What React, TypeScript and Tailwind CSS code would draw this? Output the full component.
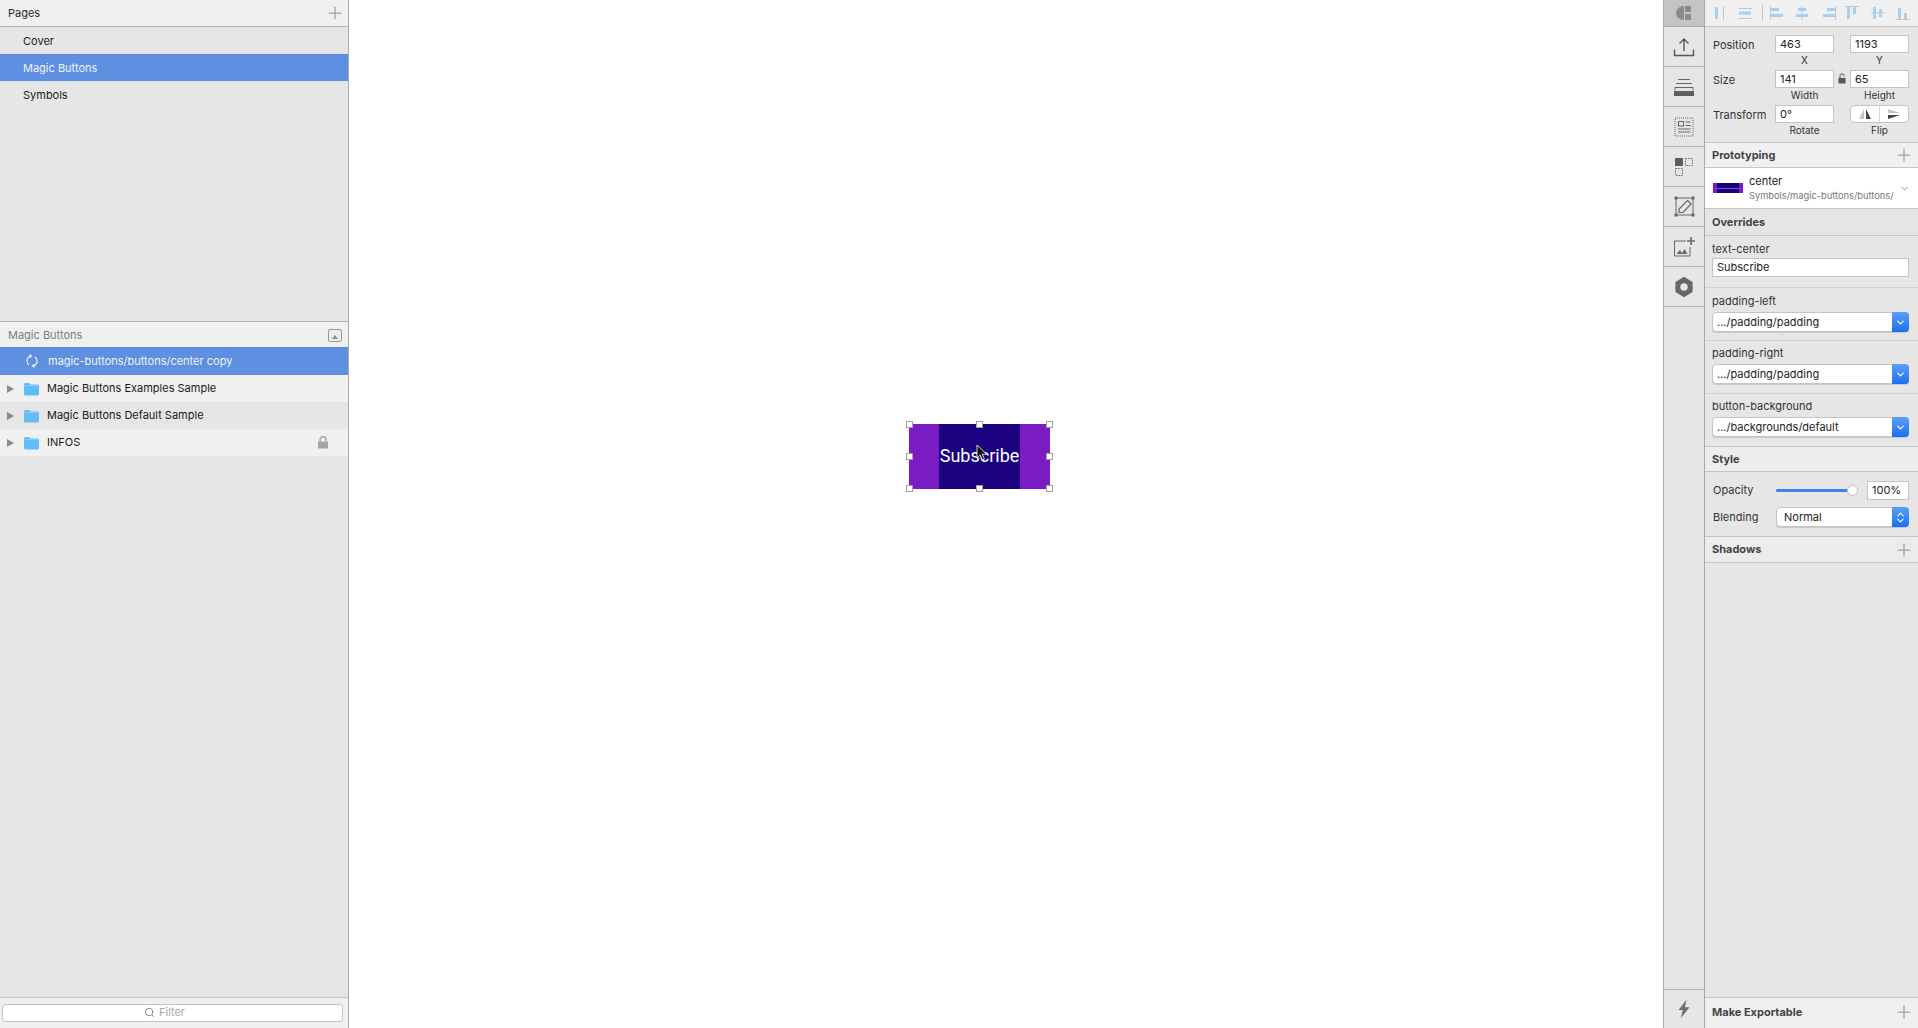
import type { ReactNode } from "react";
import { Plus, ChevronDown, Search, ChevronsUpDown } from "lucide-react";

const font = "font-['Inter','Liberation_Sans',sans-serif]";

function FolderIcon() {
  return (
    <svg width="17" height="14" viewBox="0 0 17 14" className="shrink-0">
      <path d="M1 2.500C1 1.600 1.600 1 2.500 1h3.600l1.500 1.500h7c.8 0 1.400.6 1.400 1.400v8.200c0 .8-.6 1.400-1.400 1.400H2.400C1.600 13.500 1 12.900 1 12.100z" fill="#62bdf6" />
      <path d="M1 3.600h15" stroke="#8fd2fa" strokeWidth="0.8" />
    </svg>
  );
}

function Disclosure() {
  return <span className="ml-[7px] mr-[9px] h-0 w-0 shrink-0 border-y-[4.5px] border-l-[7px] border-y-transparent border-l-[#8a8a8a]" />;
}

function LayerRow({ name, dark, locked }: { name: string; dark?: boolean; locked?: boolean }) {
  return (
    <div className={`flex h-[27px] items-center text-[11px] text-[#1a1a1a] ${dark ? "bg-[#e6e6e6]" : "bg-[#f0f0f0]"}`}>
      <Disclosure />
      <FolderIcon />
      <span className="ml-[7px]">{name}</span>
      {locked && (
        <svg width="12" height="13" viewBox="0 0 12 13" className="-mt-[1px] ml-auto mr-[19px]">
          <rect x="1" y="5.500" width="10" height="7" rx="1" fill="#a3a3a3" />
          <path d="M3 5.500V3.800a3 3 0 0 1 6 0v1.700" fill="none" stroke="#a3a3a3" strokeWidth="1.400" />
        </svg>
      )}
    </div>
  );
}

function PageRow({ name, active }: { name: string; active?: boolean }) {
  return (
    <div className={`flex h-[27px] items-center pl-[23px] pt-px text-[11px] ${active ? "bg-[#5f8fe0] text-[#eef3fc]" : "text-[#1a1a1a]"}`}>
      {name}
    </div>
  );
}

function LeftPanel() {
  return (
    <aside className="flex h-full w-[349px] shrink-0 flex-col border-r border-[#a8a8a8] bg-[#e6e6e6]">
      <div className="flex h-[27px] shrink-0 items-center justify-between border-b border-[#b4b4b4] bg-[#f0f0f0] pl-[8px] pr-[3px] text-[11px] text-[#2a2a2a]">
        <span>Pages</span>
        <Plus className="h-[20px] w-[20px] text-[#a0a0a0]" strokeWidth={1.500} />
      </div>
      <div className="h-[295px] shrink-0 border-b border-[#b4b4b4]">
        <PageRow name="Cover" />
        <PageRow name="Magic Buttons" active />
        <PageRow name="Symbols" />
      </div>
      <div className="flex h-[25px] shrink-0 items-center justify-between bg-[#f0f0f0] pl-[8px] pr-[6px] pt-px text-[11px] text-[#7d7d7d]">
        <span>Magic Buttons</span>
        <span className="flex h-[13px] w-[14px] items-end justify-center rounded-[2px] border border-[#9a9a9a] bg-[#ececec] pb-[2px]">
          <span className="h-0 w-0 border-x-[3px] border-b-[4px] border-x-transparent border-b-[#8a8a8a]" />
        </span>
      </div>
      <div className="flex h-[28px] shrink-0 items-center bg-[#5f8fe0] text-[11px] text-[#eef3fc]">
        <svg width="14" height="14" viewBox="0 0 14 14" fill="none" stroke="#eef3fc" strokeWidth="1.200" className="ml-[25px] mr-[9px] shrink-0">
          <path d="M6 2C3 2.500 1.500 5 2 7.500 2.300 9 3 10 4 11" />
          <path d="M4.500.5 6.500 2 4.500 3.700" />
          <path d="M8 12c3-.5 4.500-3 4-5.500C11.700 5 11 4 10 3" />
          <path d="M9.500 10.300 7.500 12l2 1.500" />
        </svg>
        magic-buttons/buttons/center copy
      </div>
      <LayerRow name="Magic Buttons Examples Sample" />
      <LayerRow name="Magic Buttons Default Sample" dark />
      <LayerRow name="INFOS" locked />
      <div className="flex-1" />
      <div className="flex h-[31px] shrink-0 items-center border-t border-[#c6c6c6] bg-[#f0f0f0] pb-[1px] pl-[2px] pr-[5px]">
        <div className="flex h-[18px] w-full items-center justify-center gap-[4px] rounded-[3px] border border-[#c4c4c4] bg-white pr-[16px] text-[11px] text-[#a8a8a8]">
          <Search className="h-[11px] w-[11px] text-[#6e6e6e]" strokeWidth={1.800} />
          Filter
        </div>
      </div>
    </aside>
  );
}

function Handle({ className }: { className: string }) {
  return <span className={`absolute h-[7px] w-[7px] border border-[#a0a0a0] bg-white ${className}`} />;
}

function Canvas() {
  return (
    <main className="relative h-full flex-1 bg-white">
      <div className="absolute left-[560px] top-[424px] flex h-[65px] w-[141px] bg-[#7a1bc4]">
        <div className="ml-[30px] flex w-[81px] items-center justify-center bg-[#1b0080] pb-[2px] font-['Roboto',sans-serif] text-[18px] text-white">
          Subscribe
        </div>
        <Handle className="-left-[3px] -top-[3px]" />
        <Handle className="left-[67px] -top-[3px]" />
        <Handle className="-right-[3px] -top-[3px]" />
        <Handle className="-left-[3px] top-[29px]" />
        <Handle className="-right-[3px] top-[29px]" />
        <Handle className="-bottom-[3px] -left-[3px]" />
        <Handle className="-bottom-[3px] left-[67px]" />
        <Handle className="-bottom-[3px] -right-[3px]" />
        <svg width="12" height="18" viewBox="0 0 12 18" className="absolute left-[67px] top-[20px]">
          <path d="M1 1v13l3.200-3 2.200 5 2-.9-2.100-4.900h4.400z" fill="#111" stroke="#fff" strokeWidth="0.8" />
        </svg>
      </div>
    </main>
  );
}

function StripCell({ children }: { children: ReactNode }) {
  return <div className="flex h-[40px] items-center justify-center border-b border-[#b4b4b4]">{children}</div>;
}

function Strip() {
  return (
    <div className="flex h-full w-[42px] shrink-0 flex-col border-x border-[#a8a8a8] bg-[#e6e6e6]">
      <div className="flex h-[27px] items-center justify-center border-b border-[#a8a8a8] bg-[#c4c4c4]">
        <svg width="18" height="16" viewBox="0 0 18 16">
          <path d="M9 1v14C4.500 15 1 12 1 8s3.500-7 8-7z" fill="#8b8b8b" />
          <path d="M10 1h6v6h-6zM10 9h6v6h-6z" fill="#8b8b8b" />
        </svg>
      </div>
      <StripCell>
        <svg width="22" height="22" viewBox="0 0 22 22" fill="none" stroke="#555" strokeWidth="1.400">
          <path d="M1.500 13.500v6h19v-6" />
          <path d="M11 15V3M6.500 7.500 11 3l4.500 4.500" />
        </svg>
      </StripCell>
      <StripCell>
        <svg width="22" height="22" viewBox="0 0 22 22" fill="none" stroke="#666" strokeWidth="1">
          <path d="M5 3.500h12M3 7.500h16M2 11.500v3M20 11.500v3M2 11.500h18" />
          <rect x="1" y="15" width="20" height="5" fill="#5e5e5e" stroke="none" />
        </svg>
      </StripCell>
      <StripCell>
        <svg width="20" height="20" viewBox="0 0 20 20" fill="none" stroke="#666" strokeWidth="1">
          <rect x="1" y="1" width="18" height="18" strokeDasharray="1 1" />
          <rect x="4.500" y="4.500" width="5" height="4.500" />
          <path d="M11.500 5h5M11.500 8.500h5M4 12h12.500M4 15h12.500" />
        </svg>
      </StripCell>
      <StripCell>
        <svg width="20" height="20" viewBox="0 0 20 20" fill="none" stroke="#666" strokeWidth="1">
          <rect x="1" y="1" width="8" height="8" fill="#5e5e5e" stroke="none" />
          <rect x="11.500" y="1.500" width="7" height="7" strokeDasharray="1.500 1.200" />
          <rect x="1.500" y="11.500" width="7" height="7" strokeDasharray="1.500 1.200" />
        </svg>
      </StripCell>
      <StripCell>
        <svg width="21" height="21" viewBox="0 0 21 21" fill="none" stroke="#666" strokeWidth="1">
          <rect x="2" y="2" width="17" height="17" />
          <rect x="0.500" y="0.500" width="3" height="3" fill="#666" stroke="none" />
          <rect x="17.500" y="0.500" width="3" height="3" fill="#666" stroke="none" />
          <rect x="0.500" y="17.500" width="3" height="3" fill="#666" stroke="none" />
          <rect x="17.500" y="17.500" width="3" height="3" fill="#666" stroke="none" />
          <path d="M13.500 4.500 17 8l-8 8.500H5V13z" fill="#e6e6e6" strokeWidth="1.200" />
        </svg>
      </StripCell>
      <StripCell>
        <svg width="22" height="22" viewBox="0 0 22 22" fill="none" stroke="#666" strokeWidth="1">
          <path d="M13 5H1.500v15h15.500v-9" />
          <path d="M3.500 18l3.500-4 2.500 4zM8.500 18l3-5 3 5z" fill="#666" stroke="none" />
          <path d="M18 1v8M14 5h8" strokeWidth="1.600" />
        </svg>
      </StripCell>
      <StripCell>
        <svg width="20" height="22" viewBox="0 0 20 22">
          <path fillRule="evenodd" d="M10 .8 18.600 5.900v10.200L10 21.200 1.400 16.100V5.900zM10 7.300a3.700 3.700 0 1 0 0 7.400 3.700 3.700 0 0 0 0-7.400z" fill="#666" />
        </svg>
      </StripCell>
      <div className="flex-1" />
      <div className="flex h-[39px] items-center justify-center border-t border-[#b4b4b4]">
        <svg width="14" height="20" viewBox="0 0 14 20">
          <path d="M9.500 .8 1.500 11h4.300L3.800 19.200 12.500 8.200H7.900z" fill="#707070" />
        </svg>
      </div>
    </div>
  );
}

function NumField({ value, sub }: { value: string; sub: string }) {
  return (
    <div className="flex w-[59px] flex-col items-center">
      <div className="flex h-[18px] w-full items-center border border-[#c4c4c4] bg-white pl-[4px] text-[11px] text-[#222]">{value}</div>
      <span className="text-[10px] leading-[14px] text-[#333]">{sub}</span>
    </div>
  );
}

function SelectField({ value, up }: { value: string; up?: boolean }) {
  return (
    <div className="flex h-[20px] w-full items-center rounded-[4px] border border-[#c4c4c4] bg-white text-[11px] text-[#222] shadow-[0_1px_0_rgba(0,0,0,0.12)]">
      <span className={`flex-1 ${up ? "pl-[7px]" : "pl-[4px]"}`}>{value}</span>
      <span className="-mr-px flex h-[20px] w-[17px] items-center justify-center rounded-r-[4px] bg-gradient-to-b from-[#5a9ff5] to-[#1a6ef2]">
        {up ? (
          <ChevronsUpDown className="h-[13px] w-[13px] text-white" strokeWidth={2} />
        ) : (
          <ChevronDown className="h-[11px] w-[11px] text-white" strokeWidth={2.500} />
        )}
      </span>
    </div>
  );
}

function SectionHeader({ title, plus, h, className = "" }: { title: string; plus?: boolean; h: string; className?: string }) {
  return (
    <div className={`flex shrink-0 items-center justify-between border-b border-[#c6c6c6] pl-[7px] pr-[4px] text-[11px] font-bold text-[#444] ${h} ${className}`}>
      <span>{title}</span>
      {plus && <Plus className="h-[20px] w-[20px] text-[#a0a0a0]" strokeWidth={1.500} />}
    </div>
  );
}

function OverrideSelect({ label, value, first }: { label: string; value: string; first?: boolean }) {
  return (
    <div className={`flex h-[53px] flex-col border-t border-[#d2d2d2] pl-[7px] pr-[9px] ${first ? "pt-[6px]" : "pt-[5px]"}`}>
      <span className="h-[18px] text-[11px] leading-[14px] text-[#333]">{label}</span>
      <SelectField value={value} />
    </div>
  );
}

function AlignBars({ ml, d, line }: { ml: string; d: string; line: string }) {
  return (
    <svg width="16" height="16" viewBox="0 0 16 16" className={`shrink-0 ${ml}`}>
      <path d={line} stroke="#c6c6c6" strokeWidth="1" fill="none" />
      <path d={d} fill="#a9cff2" />
    </svg>
  );
}

function Inspector() {
  return (
    <div className="flex h-full w-[213px] shrink-0 flex-col bg-[#e6e6e6]">
      <div className="flex h-[27px] shrink-0 items-center border-b border-[#c6c6c6] bg-[#f0f0f0]">
        <AlignBars ml="ml-[5px]" line="M13.500 1v14" d="M5 2h3v12H5z" />
        <AlignBars ml="ml-[11px]" line="M1 3.500h14M1 13.500h14" d="M2 6.500h12v3H2z" />
        <span className="ml-[9px] h-[16px] w-px bg-[#c6c6c6]" />
        <AlignBars ml="ml-[6px]" line="M1.500 1v14" d="M2 3h8v3H2zM2 9h12v3H2z" />
        <AlignBars ml="ml-[9px]" line="M8 1v14" d="M4 3h8v3H4zM2 9h12v3H2z" />
        <AlignBars ml="ml-[11px]" line="M14.500 1v14" d="M6 3h8v3H6zM2 9h12v3H2z" />
        <AlignBars ml="ml-[7px]" line="M1 1.500h14" d="M3 2h3v12H3zM9 2h3v7H9z" />
        <AlignBars ml="ml-[10px]" line="M1 8h14" d="M3 2h3v12H3zM9 4h3v8H9z" />
        <AlignBars ml="ml-[9px]" line="M1 14.500h14" d="M3 3h3v11H3zM9 8h3v6H9z" />
      </div>

      <div className="flex h-[116px] shrink-0 flex-col border-b border-[#c6c6c6] pl-[8px] pr-[9px] pt-[8px] text-[11px] text-[#333]">
        <div className="flex h-[35px]">
          <span className="w-[62px] pt-[2px]">Position</span>
          <NumField value="463" sub="X" />
          <span className="w-[16px]" />
          <NumField value="1193" sub="Y" />
        </div>
        <div className="flex h-[35px]">
          <span className="w-[62px] pt-[2px]">Size</span>
          <NumField value="141" sub="Width" />
          <span className="flex w-[16px] justify-center pt-[3px]">
            <svg width="8" height="11" viewBox="0 0 8 11">
              <rect x="0.500" y="5" width="7" height="5.500" rx="0.500" fill="#555" />
              <path d="M2 5V2.800a2 2 0 0 1 4 0V3.500" fill="none" stroke="#555" strokeWidth="1" />
            </svg>
          </span>
          <NumField value="65" sub="Height" />
        </div>
        <div className="flex h-[35px]">
          <span className="w-[62px] pt-[2px]">Transform</span>
          <NumField value="0°" sub="Rotate" />
          <span className="w-[16px]" />
          <div className="flex w-[59px] flex-col items-center">
            <div className="flex h-[18px] w-full rounded-[4px] border border-[#c4c4c4] bg-white">
              <span className="flex flex-1 items-center justify-center border-r border-[#d6d6d6]">
                <svg width="14" height="12" viewBox="0 0 14 12">
                  <path d="M6 1v10H1z" fill="#c4c4c4" />
                  <path d="M8 1v10h5z" fill="#444" />
                </svg>
              </span>
              <span className="flex flex-1 items-center justify-center">
                <svg width="14" height="12" viewBox="0 0 14 12">
                  <path d="M1 1l12 4H1z" fill="#c4c4c4" />
                  <path d="M1 7h12L1 11z" fill="#444" />
                </svg>
              </span>
            </div>
            <span className="text-[10px] leading-[14px] text-[#333]">Flip</span>
          </div>
        </div>
      </div>

      <SectionHeader title="Prototyping" plus h="h-[25px]" className="bg-[#f0f0f0]" />
      <div className="flex h-[41px] shrink-0 items-center border-b border-[#c6c6c6] bg-white pl-[8px]">
        <span className="flex h-[10px] w-[30px] items-center justify-center bg-[#7a1bc4]">
          <span className="flex h-[10px] w-[22px] items-center bg-[#1b0080]">
            <span className="h-px w-full bg-[#6f5fc0]" />
          </span>
        </span>
        <div className="ml-[6px] flex flex-col pt-px text-[#222]">
          <span className="text-[11px] leading-[14px]">center</span>
          <span className="text-[9.300px] leading-[15px] text-[#777]">Symbols/magic-buttons/buttons/</span>
        </div>
        <ChevronDown className="ml-auto mr-[8px] h-[11px] w-[11px] text-[#777]" strokeWidth={1.800} />
      </div>

      <SectionHeader title="Overrides" h="h-[27px]" />
      <div className="flex h-[51px] shrink-0 flex-col pl-[7px] pr-[9px] pt-[6px]">
        <span className="h-[16px] text-[11px] leading-[14px] text-[#333]">text-center</span>
        <div className="flex h-[19px] items-center border border-[#c4c4c4] bg-white pl-[4px] text-[11px] text-[#222]">Subscribe</div>
      </div>
      <OverrideSelect label="padding-left" value=".../padding/padding" first />
      <OverrideSelect label="padding-right" value=".../padding/padding" />
      <OverrideSelect label="button-background" value=".../backgrounds/default" />

      <SectionHeader title="Style" h="h-[26px]" className="border-t border-t-[#c6c6c6] bg-[#ececec]" />
      <div className="flex h-[65px] shrink-0 flex-col gap-[7px] border-b border-[#c6c6c6] pl-[8px] pr-[9px] pt-[8px] text-[11px] text-[#333]">
        <div className="flex h-[20px] items-center">
          <span className="w-[63px]">Opacity</span>
          <div className="relative h-[3px] w-[77px] rounded-full bg-[#3b82ea]">
            <span className="absolute -right-[5px] -top-[4px] h-[11px] w-[11px] rounded-full border border-[#c0c0c0] bg-white" />
          </div>
          <div className="ml-auto flex h-[19px] w-[42px] items-center border border-[#c4c4c4] bg-white pl-[4px] text-[#222]">100%</div>
        </div>
        <div className="flex h-[20px] items-center">
          <span className="w-[63px]">Blending</span>
          <div className="flex-1">
            <SelectField value="Normal" up />
          </div>
        </div>
      </div>
      <SectionHeader title="Shadows" plus h="h-[26px]" className="bg-[#ececec]" />
      <div className="flex-1" />
      <div className="flex h-[31px] shrink-0 items-center justify-between border-t border-[#c6c6c6] bg-[#f0f0f0] pb-[2px] pl-[7px] pr-[4px] text-[11px] font-bold text-[#444]">
        <span>Make Exportable</span>
        <Plus className="h-[20px] w-[20px] text-[#a0a0a0]" strokeWidth={1.500} />
      </div>
    </div>
  );
}

export default function App() {
  return (
    <div className={`flex h-[1028px] w-[1918px] overflow-hidden bg-white ${font}`}>
      <LeftPanel />
      <Canvas />
      <Strip />
      <Inspector />
    </div>
  );
}
